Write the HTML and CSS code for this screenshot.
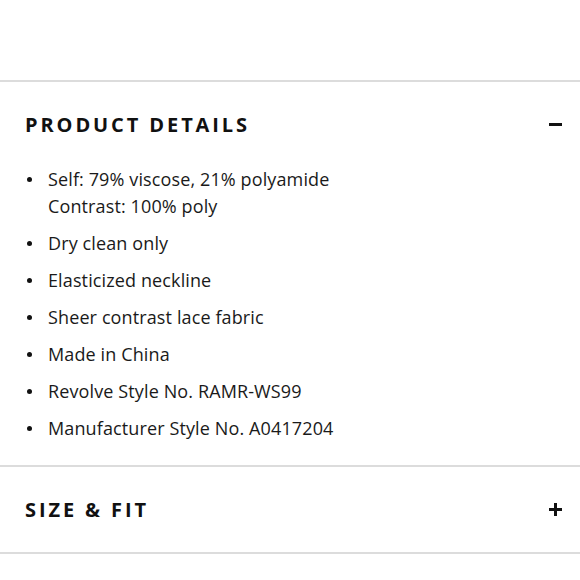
FILE: index.html
```html
<!DOCTYPE html>
<html lang="en">
<head>
<meta charset="utf-8">
<link rel="stylesheet" href="styles.css">
</head>
<body>
<div class="accordion">
  <section class="panel">
    <div class="panel-head">
      <h2 class="panel-title">PRODUCT DETAILS</h2>
      <span class="icon icon-minus"></span>
    </div>
    <ul class="details">
      <li>Self: 79% viscose, 21% polyamide<br>Contrast: 100% poly</li>
      <li>Dry clean only</li>
      <li>Elasticized neckline</li>
      <li>Sheer contrast lace fabric</li>
      <li>Made in China</li>
      <li>Revolve Style No. RAMR-WS99</li>
      <li>Manufacturer Style No. A0417204</li>
    </ul>
  </section>
  <section class="panel">
    <div class="panel-head panel-head-closed">
      <h2 class="panel-title">SIZE &amp; FIT</h2>
      <span class="icon icon-plus"></span>
    </div>
  </section>
</div>
</body>
</html>
```
FILE: styles.css
```css
html, body {
  margin: 0;
  padding: 0;
  background: #fff;
}
body {
  font-family: "Open Sans", "Liberation Sans", sans-serif;
  color: #111;
}
.accordion {
  padding-top: 80px;
}
.panel {
  border-top: 2px solid #dcdcdc;
}
.panel:last-child {
  border-bottom: 2px solid #dcdcdc;
}
.panel-head {
  height: 84px;
  display: flex;
  align-items: center;
  justify-content: space-between;
  padding: 0 18px 0 25px;
}
.panel-head-closed {
  height: 85px;
}
.panel-title {
  margin: 0;
  font-size: 20px;
  font-weight: 700;
  letter-spacing: 2.9px;
  color: #111;
}
.icon {
  position: relative;
  width: 13px;
  height: 13px;
}
.icon::before,
.icon::after {
  content: "";
  position: absolute;
  background: #111;
}
.icon::before {
  left: 0;
  top: 5px;
  width: 13px;
  height: 3px;
}
.icon-minus::after {
  display: none;
}
.icon-plus::after {
  left: 5px;
  top: 0;
  width: 3px;
  height: 13px;
}
.details {
  margin: 0;
  padding: 0 0 23px 48px;
  list-style: none;
  font-size: 18px;
  line-height: 27px;
  letter-spacing: 0.12px;
  color: #1a1a1a;
}
.details li {
  position: relative;
  margin-bottom: 10px;
}
.details li:last-child {
  margin-bottom: 0;
}
.details li::before {
  content: "";
  position: absolute;
  left: -21px;
  top: 11px;
  width: 5px;
  height: 5px;
  border-radius: 50%;
  background: #111;
}
```
